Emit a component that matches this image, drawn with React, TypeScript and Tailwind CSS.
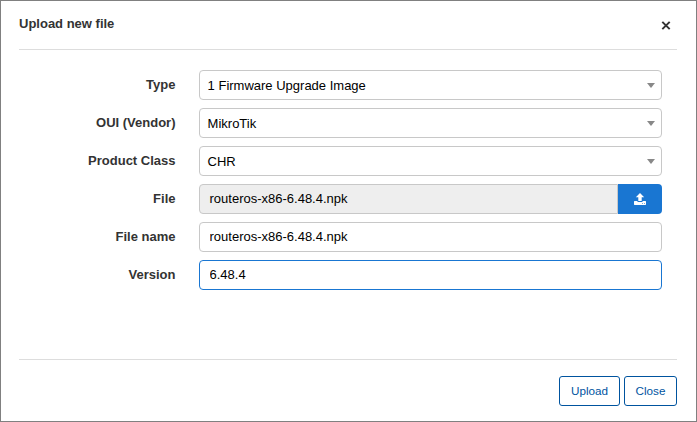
import type { ReactNode } from 'react';

function Row({ label, children }: { label: string; children: ReactNode }) {
  return (
    <div className="flex h-[30px]">
      <label className="w-[156.5px] shrink-0 text-right font-bold leading-[30px] text-[#333]">{label}</label>
      <div className="ml-[23.5px] flex w-[463px]">{children}</div>
    </div>
  );
}

function Select({ value }: { value: string }) {
  return (
    <div className="flex h-[30px] w-full items-center justify-between rounded border border-[#c8c8c8] bg-white pl-[7.6px] pr-1.5">
      <span className="pt-px leading-[28px] text-black">{value}</span>
      <span className="h-0 w-0 border-x-4 border-t-[5px] border-x-transparent border-t-[#888]" />
    </div>
  );
}

export default function App() {
  return (
    <div className="flex h-[422px] w-[697px] flex-col border border-[#808080] bg-white pl-[18px] pr-[19px] font-['Liberation_Sans',Arial,sans-serif] text-[13px]">
      <header className="flex h-[49px] shrink-0 items-start justify-between border-b border-[#ddd]">
        <h1 className="pt-[13px] font-bold leading-5 text-[#333]">Upload new file</h1>
        <button className="mr-[6px] mt-5 h-[9px] w-[10px]" aria-label="Close">
          <svg width="10" height="9" viewBox="0 0 10 9" className="block" fill="none" stroke="#333" strokeWidth="2">
            <path d="M1.3 .9 8.7 8.1M8.7 .9 1.3 8.1" />
          </svg>
        </button>
      </header>
      <main className="flex h-[309px] shrink-0 flex-col gap-2 pt-5">
        <Row label="Type"><Select value="1 Firmware Upgrade Image" /></Row>
        <Row label="OUI (Vendor)"><Select value="MikroTik" /></Row>
        <Row label="Product Class"><Select value="CHR" /></Row>
        <Row label="File">
          <div className="h-[30px] w-[419px] rounded-l border border-[#c8c8c8] bg-[#eee] pl-[9.5px] leading-[28px] text-black">routeros-x86-6.48.4.npk</div>
          <button className="flex h-[30px] w-11 items-center justify-center rounded-r bg-[#1976d2]" aria-label="Choose file">
            <svg width="12" height="12" viewBox="0 0 12 12" fill="#fff">
              <path d="M6 0 10.2 4.3H7.7V8H4.3V4.3H1.8ZM.5 8H3.5V9H8.5V8H11.5L12 8.5V11.5L11.5 12H.5L0 11.5V8.5Z" />
              <path d="M8 10h1v1H8zM10 10h1v1h-1z" fill="#76addf" />
            </svg>
          </button>
        </Row>
        <Row label="File name">
          <input readOnly className="h-[30px] w-full rounded border border-[#c8c8c8] pb-px pl-[9.5px] text-black outline-none" value="routeros-x86-6.48.4.npk" />
        </Row>
        <Row label="Version">
          <input readOnly className="h-[30px] w-full rounded border border-[#1976d2] pb-px pl-[9.5px] text-black outline-none" value="6.48.4" />
        </Row>
      </main>
      <footer className="flex justify-end gap-1 border-t border-[#ddd] pt-4 text-[11.7px] text-[#00549f]">
        <button className="h-[30px] w-[61px] rounded-[3px] border border-[#00549f] pb-px leading-[27px]">Upload</button>
        <button className="h-[30px] w-[53px] rounded-[3px] border border-[#00549f] pb-px leading-[27px]">Close</button>
      </footer>
    </div>
  );
}
